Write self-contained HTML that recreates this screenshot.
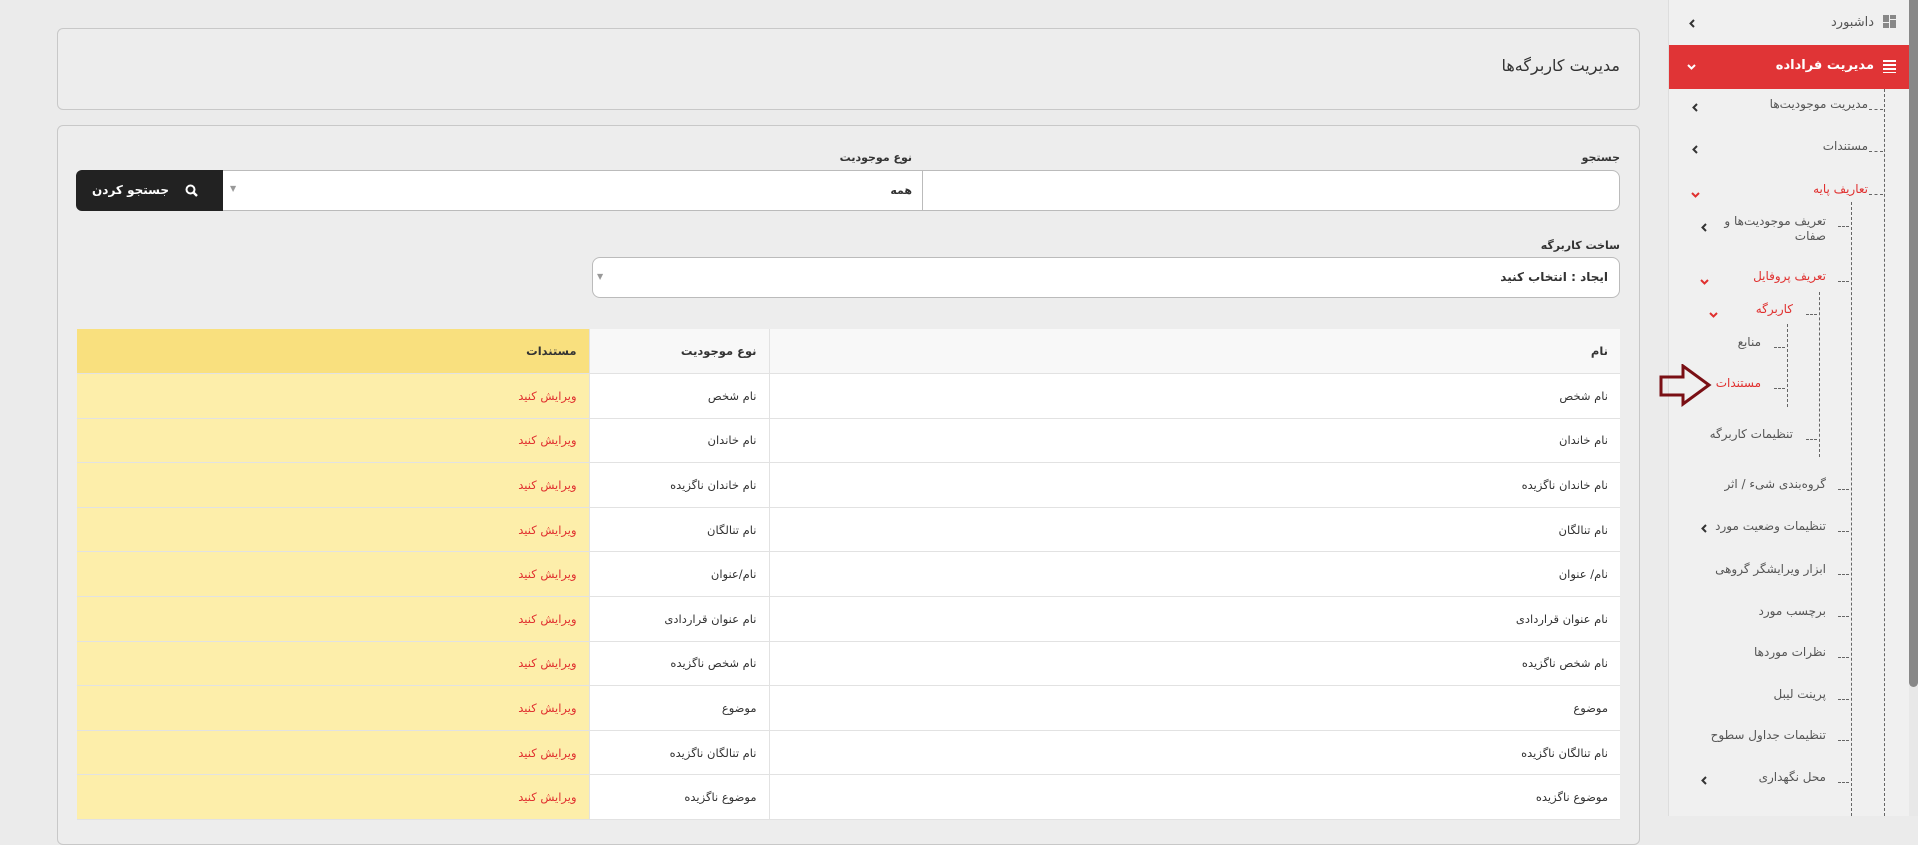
<!DOCTYPE html>
<html><head><meta charset="utf-8"><style>
*{box-sizing:border-box;margin:0;padding:0}
body{width:1918px;height:816px;overflow:hidden;background:#ebebeb;font-family:"DejaVu Sans",sans-serif;font-size:12px;color:#333;position:relative}
.a{position:absolute}
.card{position:absolute;border:1px solid #c8c8c8;border-radius:6px;background:rgba(240,240,240,.5)}
.lbl{position:absolute;font-weight:bold;font-size:11px;color:#333;direction:rtl}
.inp{position:absolute;background:#fff;border:1px solid #bbb}
table{position:absolute;left:77px;top:329px;width:1543px;border-collapse:collapse;direction:rtl;background:#fff}
td,th{height:44.6px;border-bottom:1px solid #e2e2e2;text-align:right;padding:0 12px;font-size:11.5px;font-weight:normal}
th{font-weight:bold;background:#f8f8f8}
td.y{background:#fdeeaa;color:#e0302f}
th.y{background:#f9e07e}
.c2{border-left:1px solid #e2e2e2;border-right:1px solid #e2e2e2}
.sb{position:absolute;left:1668px;top:0;width:241px;height:816px;background:#f0f0f0;border-left:1px solid #ddd}
.it{position:absolute;direction:rtl;font-size:12px;color:#555;white-space:nowrap;line-height:15px}
.red{color:#e0302f}
.vl{position:absolute;border-left:1px dashed #666;width:0}
.d{position:absolute;border-top:1px dashed #666;height:0}
svg.c{position:absolute}
</style></head><body>
<div class="card" style="left:57px;top:28px;width:1583px;height:82px"></div>
<div class="it" style="right:298px;top:56px;font-size:16px;color:#333;line-height:20px">مدیریت کاربرگه‌ها</div>
<div class="card" style="left:57px;top:125px;width:1583px;height:720px"></div>
<div class="lbl" style="right:298px;top:151px">جستجو</div>
<div class="lbl" style="right:1006px;top:151px">نوع موجودیت</div>
<div class="inp" style="left:222px;top:170px;width:1398px;height:41px;border-radius:0 8px 8px 0"></div>
<div class="a" style="left:922px;top:170px;width:1px;height:41px;background:#bbb"></div>
<div class="it" style="right:1006px;top:183px;font-weight:bold;font-size:11px;color:#333">همه</div>
<div class="a" style="left:230px;top:184px;font-size:8px;color:#999">▼</div>
<div class="a" style="left:76px;top:170px;width:147px;height:41px;background:#222;border-radius:6px 0 0 6px"></div>
<div class="it" style="right:1749px;top:183px;color:#fff;font-weight:bold">جستجو کردن</div>
<svg class="c" style="left:185px;top:184px" width="13" height="13" viewBox="0 0 13 13"><circle cx="5.5" cy="5.5" r="4" fill="none" stroke="#fff" stroke-width="2"/><path d="M8.5 8.5L12 12" stroke="#fff" stroke-width="2.4"/></svg>
<div class="lbl" style="right:298px;top:239px">ساخت کاربرگه</div>
<div class="inp" style="left:592px;top:257px;width:1028px;height:41px;border-radius:8px"></div>
<div class="it" style="right:310px;top:270px;font-weight:bold;color:#333">ایجاد : انتخاب کنید</div>
<div class="a" style="left:597px;top:272px;font-size:8px;color:#999">▼</div>
<table>
<tr><th>نام</th><th class="c2" style="width:180px">نوع موجودیت</th><th class="y" style="width:512px">مستندات</th></tr>
<tr><td>نام شخص</td><td class="c2">نام شخص</td><td class="y">ویرایش کنید</td></tr>
<tr><td>نام خاندان</td><td class="c2">نام خاندان</td><td class="y">ویرایش کنید</td></tr>
<tr><td>نام خاندان ناگزیده</td><td class="c2">نام خاندان ناگزیده</td><td class="y">ویرایش کنید</td></tr>
<tr><td>نام تنالگان</td><td class="c2">نام تنالگان</td><td class="y">ویرایش کنید</td></tr>
<tr><td>نام/ عنوان</td><td class="c2">نام/عنوان</td><td class="y">ویرایش کنید</td></tr>
<tr><td>نام عنوان قراردادی</td><td class="c2">نام عنوان قراردادی</td><td class="y">ویرایش کنید</td></tr>
<tr><td>نام شخص ناگزیده</td><td class="c2">نام شخص ناگزیده</td><td class="y">ویرایش کنید</td></tr>
<tr><td>موضوع</td><td class="c2">موضوع</td><td class="y">ویرایش کنید</td></tr>
<tr><td>نام تنالگان ناگزیده</td><td class="c2">نام تنالگان ناگزیده</td><td class="y">ویرایش کنید</td></tr>
<tr><td>موضوع ناگزیده</td><td class="c2">موضوع ناگزیده</td><td class="y">ویرایش کنید</td></tr>
</table>

<div class="sb"></div>
<div class="a" style="left:1909px;top:0;width:9px;height:816px;background:#e8e8e8"></div>
<div class="a" style="left:1909px;top:0;width:9px;height:687px;background:#888;border-radius:0 0 5px 5px"></div>
<svg class="c" style="left:1883px;top:15px" width="13" height="13" viewBox="0 0 13 13" fill="#888"><rect x="0" y="0" width="6" height="7"/><rect x="7" y="0" width="6" height="4"/><rect x="7" y="5" width="6" height="8"/><rect x="0" y="8" width="6" height="5"/></svg>
<div class="it" style="right:44px;top:15px;font-size:13px">داشبورد</div>
<div class="a" style="left:1669px;top:45px;width:240px;height:44px;background:#e03436"></div>
<div class="a" style="left:1883px;top:60px;width:13px;height:13px;background:repeating-linear-gradient(#fff 0 2px,transparent 2px 4px)"></div>
<div class="it" style="right:44px;top:58px;font-size:13px;color:#fff;font-weight:bold">مدیریت فرادادە</div>

<div class="vl" style="left:1884px;top:89px;height:727px"></div>
<div class="vl" style="left:1851px;top:202px;height:614px"></div>
<div class="vl" style="left:1819px;top:292px;height:165px"></div>
<div class="vl" style="left:1787px;top:324px;height:83px"></div>

<div class="it" style="right:50px;top:97px">مدیریت موجودیت‌ها</div><div class="d" style="left:1869px;top:109px;width:14px"></div>
<div class="it" style="right:50px;top:139px">مستندات</div><div class="d" style="left:1869px;top:151px;width:14px"></div>
<div class="it red" style="right:50px;top:182px">تعاریف پایه</div><div class="d" style="left:1869px;top:194px;width:14px"></div>
<div class="it" style="right:92px;top:214px;text-align:right">تعریف موجودیت‌ها و<br>صفات</div><div class="d" style="left:1838px;top:226px;width:11px"></div>
<div class="it red" style="right:92px;top:269px">تعریف پروفایل</div><div class="d" style="left:1838px;top:281px;width:11px"></div>
<div class="it red" style="right:125px;top:302px">کاربرگه</div><div class="d" style="left:1806px;top:314px;width:11px"></div>
<div class="it" style="right:157px;top:335px">منابع</div><div class="d" style="left:1774px;top:347px;width:11px"></div>
<div class="it red" style="right:157px;top:376px">مستندات</div><div class="d" style="left:1774px;top:388px;width:11px"></div>
<div class="it" style="right:125px;top:427px">تنظیمات کاربرگه</div><div class="d" style="left:1806px;top:439px;width:11px"></div>
<div class="it" style="right:92px;top:477px">گروه‌بندی شیء / اثر</div><div class="d" style="left:1838px;top:489px;width:11px"></div>
<div class="it" style="right:92px;top:519px">تنظیمات وضعیت مورد</div><div class="d" style="left:1838px;top:531px;width:11px"></div>
<div class="it" style="right:92px;top:562px">ابزار ویرایشگر گروهی</div><div class="d" style="left:1838px;top:574px;width:11px"></div>
<div class="it" style="right:92px;top:604px">برچسب مورد</div><div class="d" style="left:1838px;top:616px;width:11px"></div>
<div class="it" style="right:92px;top:645px">نظرات موردها</div><div class="d" style="left:1838px;top:657px;width:11px"></div>
<div class="it" style="right:92px;top:687px">پرینت لیبل</div><div class="d" style="left:1838px;top:699px;width:11px"></div>
<div class="it" style="right:92px;top:728px">تنظیمات جداول سطوح</div><div class="d" style="left:1838px;top:740px;width:11px"></div>
<div class="it" style="right:92px;top:770px">محل نگهداری</div><div class="d" style="left:1838px;top:782px;width:11px"></div>

<svg class="c" style="left:1689px;top:19px" width="6" height="9"><path d="M5 1L1.5 4.5L5 8" fill="none" stroke="#333" stroke-width="2"/></svg>
<svg class="c" style="left:1692px;top:103px" width="6" height="9"><path d="M5 1L1.5 4.5L5 8" fill="none" stroke="#333" stroke-width="2"/></svg>
<svg class="c" style="left:1692px;top:145px" width="6" height="9"><path d="M5 1L1.5 4.5L5 8" fill="none" stroke="#333" stroke-width="2"/></svg>
<svg class="c" style="left:1701px;top:223px" width="6" height="9"><path d="M5 1L1.5 4.5L5 8" fill="none" stroke="#333" stroke-width="2"/></svg>
<svg class="c" style="left:1701px;top:524px" width="6" height="9"><path d="M5 1L1.5 4.5L5 8" fill="none" stroke="#333" stroke-width="2"/></svg>
<svg class="c" style="left:1701px;top:776px" width="6" height="9"><path d="M5 1L1.5 4.5L5 8" fill="none" stroke="#333" stroke-width="2"/></svg>

<svg class="c" style="left:1687px;top:64px" width="9" height="6"><path d="M1 1L4.5 4.5L8 1" fill="none" stroke="#fff" stroke-width="2"/></svg>
<svg class="c" style="left:1691px;top:192px" width="9" height="6"><path d="M1 1L4.5 4.5L8 1" fill="none" stroke="#e0302f" stroke-width="2"/></svg>
<svg class="c" style="left:1700px;top:279px" width="9" height="6"><path d="M1 1L4.5 4.5L8 1" fill="none" stroke="#e0302f" stroke-width="2"/></svg>
<svg class="c" style="left:1709px;top:312px" width="9" height="6"><path d="M1 1L4.5 4.5L8 1" fill="none" stroke="#e0302f" stroke-width="2"/></svg>
<svg class="c" style="left:1659px;top:364px" width="53" height="43" viewBox="0 0 53 43"><path d="M2 13 H24 V2 L50 21 L24 40 V31 H2 Z" fill="none" stroke="#7a0f14" stroke-width="3"/></svg>
</body></html>
